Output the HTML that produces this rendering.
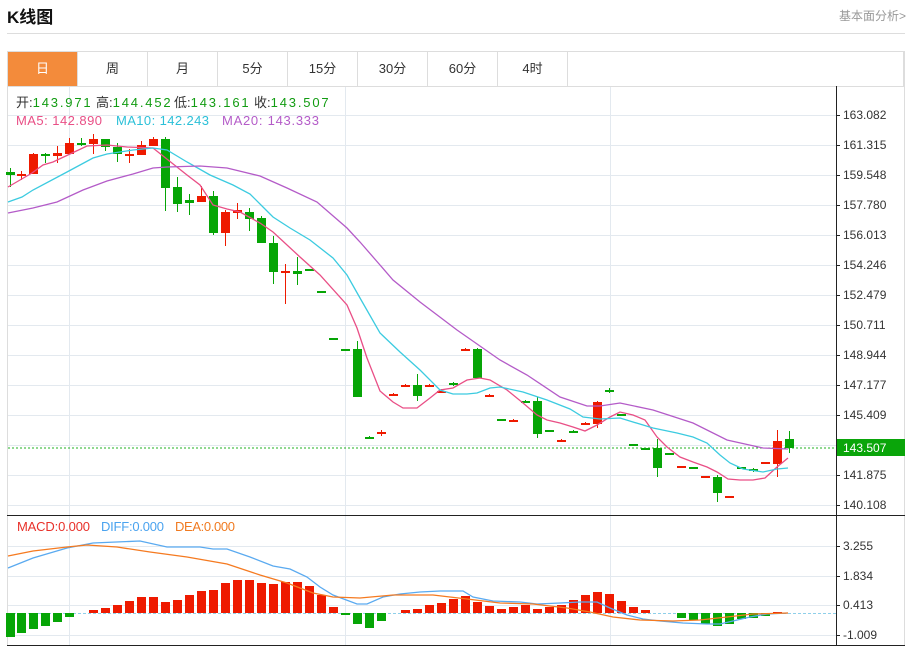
<!DOCTYPE html>
<html><head><meta charset="utf-8"><style>
body{margin:0;width:912px;height:647px;overflow:hidden;background:#fff;font-family:"Liberation Sans","Noto Sans CJK SC",sans-serif;position:relative}
.t{position:absolute;left:7px;top:3px;font-size:17px;font-weight:bold;color:#111}
.r{position:absolute;right:6px;top:7px;font-size:12px;color:#999}
.hl{position:absolute;left:7px;top:33px;width:898px;height:1px;background:#ddd}
.tabs{position:absolute;left:7px;top:51px;width:897px;height:35px;border:1px solid #ddd;border-bottom:none;box-sizing:border-box}
.tab{position:absolute;top:0;height:34px;width:70px;border-right:1px solid #ddd;box-sizing:border-box;text-align:center;line-height:34px;font-size:13px;color:#333}
.tab.on{background:#f38b3b;color:#fff}
svg{position:absolute;left:0;top:0}
</style></head><body>
<div class="t">K线图</div><div class="r">基本面分析&gt;</div><div class="hl"></div>
<div class="tabs">
<div class="tab on" style="left:0">日</div><div class="tab" style="left:70px">周</div><div class="tab" style="left:140px">月</div><div class="tab" style="left:210px">5分</div><div class="tab" style="left:280px">15分</div><div class="tab" style="left:350px">30分</div><div class="tab" style="left:420px">60分</div><div class="tab" style="left:490px">4时</div>
</div>
<svg id="s" width="912" height="647" xmlns="http://www.w3.org/2000/svg" font-family="Liberation Sans, Noto Sans CJK SC, sans-serif" font-size="12">
<g id="grid" stroke="#e3e9ef" stroke-width="1"></g>
<line x1="7.5" y1="86" x2="7.5" y2="646" stroke="#ddd"/>
<line x1="904.5" y1="51" x2="904.5" y2="646" stroke="#ddd"/>
<line x1="7" y1="86.5" x2="905" y2="86.5" stroke="#ddd"/>
<line x1="836.5" y1="86" x2="836.5" y2="646" stroke="#222"/>
<line x1="7" y1="515.5" x2="905" y2="515.5" stroke="#222"/>
<line x1="7" y1="645.5" x2="905" y2="645.5" stroke="#222"/>
<g id="ax" fill="#333"></g>
<line x1="8" y1="448" x2="836" y2="448" stroke="#22b022" stroke-dasharray="2,2"/>
<line x1="8" y1="613.5" x2="836" y2="613.5" stroke="#8fd0ea" stroke-dasharray="3,2"/>
<g id="c"></g><g id="m"></g><g id="l" fill="none" stroke-width="1.3"></g>
<rect x="837" y="439" width="68" height="17" fill="#0aa50a"/>
<text x="843" y="452" fill="#fff">143.507</text>
<g font-size="13">
<text x="16" y="107" fill="#333">开:<tspan fill="#129c12" textLength="58">143.971</tspan></text>
<text x="96" y="107" fill="#333">高:<tspan fill="#129c12" textLength="58">144.452</tspan></text>
<text x="174" y="107" fill="#333">低:<tspan fill="#129c12" textLength="58">143.161</tspan></text>
<text x="254" y="107" fill="#333">收:<tspan fill="#129c12" textLength="58">143.507</tspan></text>
<text x="16" y="125" fill="#e94f86" textLength="86">MA5: 142.890</text>
<text x="116" y="125" fill="#2bc0d8" textLength="93">MA10: 142.243</text>
<text x="222" y="125" fill="#b45bc8" textLength="97">MA20: 143.333</text>
<text x="17" y="531" fill="#e8312a" textLength="73">MACD:0.000</text>
<text x="101" y="531" fill="#4aa3ef" textLength="63">DIFF:0.000</text>
<text x="175" y="531" fill="#f07a20" textLength="60">DEA:0.000</text>
</g>
</svg>
<script>
var NS="http://www.w3.org/2000/svg";
function el(p,n,a){var e=document.createElementNS(NS,n);for(var k in a)e.setAttribute(k,a[k]);document.getElementById(p).appendChild(e);return e;}
var ys=[115,145,175,205,235,265,295,325,355,385,415,475,505],lb=["163.082","161.315","159.548","157.780","156.013","154.246","152.479","150.711","148.944","147.177","145.409","141.875","140.108"];
ys.forEach(function(y,i){el("grid","line",{x1:8,x2:836,y1:y+.5,y2:y+.5});el("ax","line",{x1:836,x2:840,y1:y+.5,y2:y+.5,stroke:"#222"});el("ax","text",{x:843,y:y+4}).textContent=lb[i];});
el("grid","line",{x1:8,x2:836,y1:445.5,y2:445.5});
[[546,"3.255"],[576,"1.834"],[605,"0.413"],[635,"-1.009"]].forEach(function(a){el("grid","line",{x1:8,x2:836,y1:a[0]+.5,y2:a[0]+.5});el("ax","line",{x1:836,x2:840,y1:a[0]+.5,y2:a[0]+.5,stroke:"#222"});el("ax","text",{x:843,y:a[0]+4}).textContent=a[1];});
[69,345,610].forEach(function(x){el("grid","line",{x1:x+.5,x2:x+.5,y1:87,y2:645});});
var R="#ee1a00",G="#06a506";
var C=[[10,"g",172,175,168,187],[21,"r",174,176,171,180],[33,"r",154,174,153,174],[45,"g",154,155,153,163],[57,"r",153,156,146,163],[69,"r",143,154,138,154],[81,"g",143,144,138,146],[93,"r",139,144,134,154],[105,"g",139,147,139,151],[117,"g",147,154,143,162],[129,"r",154,156,149,163],[141,"r",145,155,141,155],[153,"r",139,146,137,146],[165,"g",139,188,137,211],[177,"g",187,204,177,212],[189,"g",200,203,194,215],[201,"r",196,202,186,202],[213,"g",196,233,191,235],[225,"r",212,233,210,246],[237,"r",210,213,203,219],[249,"g",212,219,208,231],[261,"g",218,243,216,243],[273,"g",243,272,236,284],[285,"r",271,272,264,304],[297,"g",271,274,257,285],[309,"g",269,270,269,270],[321,"g",291,292,291,292],[333,"g",338,340,338,340],[345,"g",349,350,349,350],[357,"g",349,397,341,397],[369,"g",437,438,436,439],[381,"r",432,434,430,436],[393,"r",394,395,393,396],[405,"r",385,386,384,387],[417,"g",385,396,374,401],[429,"r",385,386,384,387],[441,"r",391,392,389,393],[453,"g",383,385,382,386],[465,"r",349,350,348,351],[477,"g",349,378,348,378],[489,"r",395,396,394,397],[501,"g",419,420,419,420],[513,"r",420,421,419,422],[525,"g",401,402,400,403],[537,"g",401,434,397,438],[549,"g",430,431,430,431],[561,"r",440,441,439,442],[573,"g",431,432,430,433],[585,"r",423,424,422,425],[597,"r",402,424,401,428],[609,"g",390,391,388,393],[621,"g",414,415,414,416],[633,"g",444,446,444,446],[645,"g",448,449,448,449],[657,"g",448,468,439,477],[669,"g",453,455,453,455],[681,"r",466,467,466,467],[693,"g",467,469,467,469],[705,"r",476,477,476,477],[717,"g",477,493,475,502],[729,"r",496,497,496,497],[741,"g",467,469,467,469],[753,"g",469,471,468,472],[765,"r",462,463,462,463],[777,"r",441,464,430,477],[789,"g",439,448,431,453]];
C.forEach(function(c){var col=c[1]=="r"?R:G;el("c","line",{x1:c[0]+.5,x2:c[0]+.5,y1:c[4],y2:c[5],stroke:col});var h=Math.max(c[3]-c[2],2);el("c","rect",{x:c[0]-4,y:c[2],width:9,height:h,fill:col});});
var M=[[10,637],[21,633],[33,629],[45,626],[57,622],[69,617],[93,610],[105,608],[117,605],[129,601],[141,597],[153,597],[165,602],[177,600],[189,595],[201,591],[213,590],[225,583],[237,580],[249,580],[261,583],[273,584],[285,582],[297,582],[309,586],[321,595],[333,607],[345,615],[357,624],[369,628],[381,621],[405,610],[417,609],[429,605],[441,603],[453,599],[465,596],[477,602],[489,606],[501,609],[513,607],[525,605],[537,609],[549,607],[561,605],[573,600],[585,595],[597,592],[609,594],[621,601],[633,607],[645,610],[681,618],[693,620],[705,624],[717,626],[729,624],[741,619],[753,618],[765,616],[777,612]];
M.forEach(function(m){var z=613,col=m[1]<z?R:G;el("m","rect",{x:m[0]-4,y:Math.min(m[1],z),width:9,height:Math.max(Math.abs(m[1]-z),1),fill:col});});
function pl(pts,col){el("l","polyline",{points:pts,stroke:col});}
pl("8,187 20,180 32,173 43,165 53,162 70,154 87,146 107,145 127,147 153,148 187,175 200,185 213,205 227,209 240,212 260,223 273,232 300,257 320,275 347,305 357,328 367,358 380,391 393,402 403,408 417,408 430,398 440,390 453,388 467,380 480,378 490,380 507,390 523,403 537,415 547,420 560,423 573,427 585,431 597,425 610,417 620,412 633,415 645,420 657,437 667,447 680,457 693,462 707,467 717,472 728,479 740,480 753,480 765,478 777,467 788,458","#e94f86");
pl("8,202 22,197 33,190 67,172 93,158 107,154 133,150 153,148 167,150 187,162 210,175 233,185 250,194 263,207 273,217 290,228 310,240 333,258 347,275 360,298 380,333 400,352 420,370 440,390 453,394 467,394 477,393 490,388 500,387 523,392 547,400 570,409 583,417 600,419 620,418 633,422 653,428 677,433 693,437 707,443 720,455 730,463 743,469 763,472 777,469 788,468","#3ccbe0");
pl("8,213 33,208 57,202 83,190 107,181 133,174 153,168 167,167 200,166 227,168 260,176 287,188 317,202 347,228 360,242 380,265 393,280 420,302 457,330 500,360 527,375 560,397 587,406 600,406 620,403 653,410 693,423 727,440 763,448 788,449","#b45bc8");
pl("8,568 33,558 67,548 93,543 140,541 167,547 200,547 213,549 227,549 250,557 273,566 290,569 307,577 320,587 333,595 357,604 367,604 383,597 400,594 420,592 440,591 463,591 473,597 493,601 520,602 537,604 560,603 580,602 597,602 610,608 627,615 643,619 660,621 683,623 707,624 720,624 733,621 750,617 767,614 788,613","#5aaaf0");
pl("8,556 33,551 67,547 87,545 117,547 150,552 187,557 227,564 260,575 287,583 313,593 333,597 360,598 393,595 420,595 433,595 467,599 500,603 533,604 567,608 590,612 613,617 640,620 673,621 700,620 727,617 753,614 788,613","#f57a20");
</script>
</body></html>
